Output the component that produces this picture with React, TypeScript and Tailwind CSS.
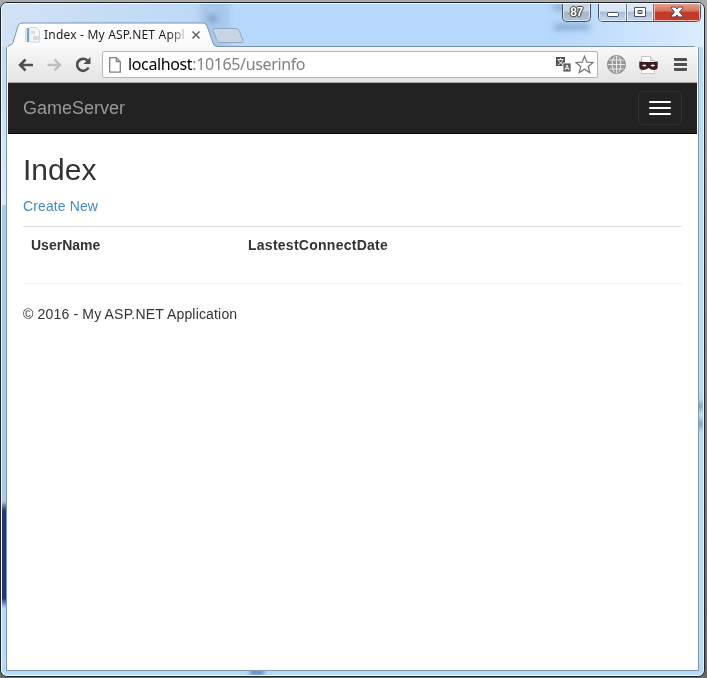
import React from "react";

function CaptionButtons() {
  return (
    <div className="absolute right-[2px] top-0 flex h-[19px] items-start">
      <div className="mr-[7px] flex h-[19px] w-[29px] items-center justify-center rounded-b-[5px] border border-t-0 border-[#43526a] bg-linear-to-b from-[#ccd6e2] from-45% via-[#a4b3c6] via-50% to-[#b4c5da] font-['Liberation_Sans',sans-serif] text-[12px] font-bold tracking-[-0.5px] text-white shadow-[inset_0_0_0_1px_#dbe6f1] [text-shadow:1px_0_1px_#444,-1px_0_1px_#444,0_1px_1px_#444,0_-1px_1px_#444]">
        87
      </div>
      <div className="flex h-[19px] w-[103px] overflow-hidden rounded-b-[5px] border border-t-0 border-[#43526a]">
        <div className="flex w-[28px] items-center justify-center border-r border-[#64748b] bg-linear-to-b from-[#dce7f3] from-45% via-[#a9bfd9] via-50% to-[#c6d9ef] shadow-[inset_0_0_0_1px_#e5eef8]">
          <svg className="shrink-0" width="14" height="14" viewBox="0 0 14 14"><rect x="1.500" y="7.500" width="11" height="4" rx="1" fill="#fff" stroke="#4b5364" /></svg>
        </div>
        <div className="flex w-[27px] items-center justify-center border-r border-[#64748b] bg-linear-to-b from-[#dce7f3] from-45% via-[#a9bfd9] via-50% to-[#c6d9ef] shadow-[inset_0_0_0_1px_#e5eef8]">
          <svg className="shrink-0" width="14" height="14" viewBox="0 0 14 14"><path d="M1.500 2.500h11v9h-11zM5 5.500h4v3h-4z" fill="#fff" fillRule="evenodd" stroke="#4b5364" /></svg>
        </div>
        <div className="flex flex-1 items-center justify-center bg-linear-to-b from-[#e6a591] from-0% via-[#d4735c] via-45% to-[#c3392a] to-50% shadow-[inset_0_0_0_1px_#eeb9aa]">
          <svg className="shrink-0" width="14" height="12" viewBox="0 0 14 12"><path d="M1.500 1h3.700L7 3l1.800-2h3.700v1.500L9.500 6l3 3.500V11H8.800L7 9l-1.800 2H1.500V9.500l3-3.500-3-3.500z" fill="#fff" stroke="#55405a" strokeLinejoin="round" /></svg>
        </div>
      </div>
    </div>
  );
}

function TabStrip() {
  return (
    <div className="relative h-[44px] w-full shrink-0">
      <svg className="absolute left-0 top-0" width="701" height="44" viewBox="2 3 701 44">
        <defs>
          <linearGradient id="tab" x1="0" y1="0" x2="0" y2="1">
            <stop offset="0" stopColor="#fff" />
            <stop offset="1" stopColor="#f8f8f8" />
          </linearGradient>
          <linearGradient id="glass" x1="0" y1="0" x2="1" y2="0">
            <stop offset="0" stopColor="#d3e2f4" />
            <stop offset="1" stopColor="#b9d8f8" />
          </linearGradient>
          <linearGradient id="shine" x1="0" y1="0" x2="1" y2="0">
            <stop offset="0" stopColor="#dcecfd" stopOpacity="0" />
            <stop offset="1" stopColor="#dcecfd" />
          </linearGradient>
          <filter id="soft" x="-20%" y="-20%" width="140%" height="140%"><feGaussianBlur stdDeviation="3" /></filter>
        </defs>
        <path d="M560 3h143v44H560z" fill="url(#shine)" />
        <g filter="url(#soft)">
          <path d="M-5 -10H215V60H-5z" fill="url(#glass)" />
          <path d="M200 0h30v60h-30z" fill="#9fc1e6" opacity=".7" />
          <path d="M208 16h9v5h-9z" fill="#5f82aa" />
          <path d="M553 4h13v6h-13zM554 24h36v6h-36z" fill="#6d8eb4" opacity=".65" />
        </g>
        <path d="M213 30.500q-1-2 2-2h20q3 0 4 2l4 10q1 2-2 2h-20q-3 0-4-2z" fill="#c8d5e4" stroke="#8ea6c1" />
        <path d="M7 48V48q1-2 2-2.500q3-.5 4-3l5-16.500q1-3 4-3h181q3 0 4 3l6 17q1 3.500 4 3.500h476q4 0 4 4H7z" fill="url(#tab)" stroke="#7b92ad" />
      </svg>
      <div className="relative flex h-full items-end pb-[3px] pl-[23px]">
        <svg className="mb-px" width="16" height="16" viewBox="0 0 16 16">
          <path d="M4.500.5h7l3 3v11.500h-10z" fill="#f5f7f8" stroke="#ccd3d9" />
          <path d="M0 1h5v14H0z" fill="#cfe2f0" />
          <path d="M2 1h2v14H2z" fill="#70a7cf" />
          <path d="M6 4h4v3H6zM8 9h7v4H8z" fill="#d5dde3" />
        </svg>
        <span className="relative top-px ml-[3px] w-[141px] overflow-hidden whitespace-nowrap bg-linear-to-r from-[#1c1c1c] from-88% to-[#c9c9c9] bg-clip-text font-['Noto_Sans',sans-serif] text-[12px] leading-[20px] tracking-[0.2px] text-transparent">
          Index - My ASP.NET Appl
        </span>
        <svg className="mb-[4px] ml-[6px]" width="10" height="10" viewBox="0 0 10 10"><path d="M1.500 1.500l7 7m0-7l-7 7" stroke="#646464" strokeWidth="1.600" /></svg>
      </div>
      <CaptionButtons />
    </div>
  );
}

function Toolbar() {
  return (
    <div className="flex h-[36px] shrink-0 items-center border-b border-[#a9a9a9] bg-linear-to-b from-[#f8f8f8] to-[#e4e4e4] pl-[10px] pr-[10px]">
      <svg width="16" height="14" viewBox="1 0 16 14" fill="none" stroke="#505050" strokeWidth="2.500"><path d="M8.500 1.500L3 7l5.500 5.500M3 7H16" /></svg>
      <svg className="ml-[13px]" width="16" height="14" viewBox="0.500 0 16 14" fill="none" stroke="#bdbdbd" strokeWidth="2.300"><path d="M8 1.500L13.500 7 8 12.500M13.500 7H1" /></svg>
      <svg className="ml-[13px]" width="17" height="16" viewBox="1 0 17 16"><path d="M13.500 10.500A6 6 0 1 1 12.300 3.500" fill="none" stroke="#505050" strokeWidth="2.600" /><path d="M15.500 0v7H8.500z" fill="#505050" /></svg>
      <div className="ml-[9px] flex h-[27px] w-[496px] shrink-0 items-center rounded-[2px] border border-[#b4b4b4] bg-white pl-[6px] pr-[3px]">
        <svg width="12" height="16" viewBox="0 0 12 16"><path d="M.7.7h6.600l4 4v10.500H.7zM7.300.7v4h4" fill="#fff" stroke="#808080" strokeWidth="1.300" /></svg>
        <span className="relative -top-px ml-[7px] whitespace-nowrap font-['Noto_Sans',sans-serif] text-[16px] leading-[24px] tracking-[-0.37px] text-[#808080]"><span className="text-black">localhost</span>:10165/userinfo</span>
        <svg className="ml-auto" width="15" height="15" viewBox="0 0 15 15">
          <path d="M0 0h9v9H0z" fill="#505050" /><path d="M7 6h8v9H7z" fill="#606060" stroke="#fff" strokeWidth=".8" />
          <path d="M1.500 2.500h6M4.500 1v1.500M2.500 3c1 2.500 3 4 4.500 4.500M6.500 3C6 5.500 4 7 2 7.500M9 13l2-5 2 5M9.800 11.500h2.500" fill="none" stroke="#fff" strokeWidth=".9" />
        </svg>
        <svg className="ml-[4px]" width="19" height="19" viewBox="0 0 19 19"><path d="M9.500 1.300l2.300 5.800 6.200.4-4.700 4 1.500 6.100-5.300-3.400-5.300 3.400 1.500-6.100-4.700-4 6.200-.4z" fill="#fff" stroke="#757575" strokeWidth="1.200" /></svg>
      </div>
      <svg className="ml-[9px]" width="19" height="19" viewBox="0 0 19 19"><circle cx="9.500" cy="9.500" r="9" fill="#999" /><g fill="none" stroke="#f1f1f1" strokeWidth=".9"><ellipse cx="9.500" cy="9.500" rx="4.300" ry="9" /><path d="M9.500 0v19M0 9.500h19M2 5h15M2 14h15" /></g><circle cx="9.500" cy="9.500" r="9" fill="none" stroke="#888" /></svg>
      <svg className="ml-[13px]" width="19" height="18" viewBox="0 0 19 18"><path d="M2.500.5h9l4 4v13h-13z" fill="#fff" stroke="#c4c4c4" /><path d="M11.500.5v4h4" fill="#e6e6e6" stroke="#c4c4c4" /><path d="M.3 5.500q9 1 18.400 0V11q0 3-4 3-3 0-5.200-2Q7.300 14 4.300 14q-4 0-4-3z" fill="#401c1e" /><path d="M3 9.500q2.500-2 4.500 0-2 2-4.500 0zM11.500 9.500q2.500-2 4.500 0-2 2-4.500 0z" fill="#fff" /></svg>
      <svg className="ml-auto" width="13" height="13" viewBox="0 0 13 13"><path d="M0 0h12q1 0 1 1v2H1Q0 3 0 2zM0 5h13v3H0zM0 10h13v2q0 1-1 1H1q-1 0-1-1z" fill="#505050" /></svg>
    </div>
  );
}

export default function App() {
  return (
    <div className="h-[678px] w-[707px] overflow-hidden bg-linear-to-b from-[#aaaaaa] to-[#686868] pt-[2px]">
      <div className="relative flex h-[675px] w-[705px] flex-col overflow-hidden rounded-[7px] border border-[#1c2530] bg-[#b7d9fc]">
        <div className="absolute left-px top-[44px] h-[158px] w-[5px] bg-linear-to-b from-[#c4daf1] to-[#dceafa]" />
        <div className="absolute left-px top-[202px] h-[300px] w-[5px] bg-[#abcaec]" />
        <div className="absolute left-px top-[498px] h-[106px] w-[5px] bg-linear-to-b from-transparent via-[#29366f] via-12% to-transparent" />
        <div className="absolute left-px top-[500px] h-[100px] w-[5px] bg-linear-to-b from-transparent from-0% via-[#29366f] via-10% to-[#29366f] to-90%" />
        <div className="absolute left-px top-[595px] h-[10px] w-[5px] bg-linear-to-b from-[#29366f] to-[#b7d9fc]" />
        <div className="absolute bottom-px left-[249px] h-[5px] w-[14px] bg-[#4b7fb8] blur-[2px]" />
        <div className="absolute right-px top-[399px] h-[8px] w-[5px] bg-[#7892b4] blur-[2px]" />
        <div className="absolute right-px top-[417px] h-[8px] w-[5px] bg-[#7892b4] blur-[2px]" />
        <div className="relative mx-px"><TabStrip /></div>
        <div className="relative mx-[5px] mb-[5px] flex min-h-0 flex-1 flex-col border-x border-b border-[#8096ad] bg-white px-px pb-px font-['Liberation_Sans',Arial,sans-serif] text-[14px] leading-[20px] text-[#333]">
          <Toolbar />
          <header className="flex h-[51px] shrink-0 items-center justify-between border-b border-[#080808] bg-[#222] px-[15px]">
            <span className="text-[18px] leading-[20px] text-[#999]">GameServer</span>
            <button className="flex h-[34px] w-[44px] flex-col items-center justify-center gap-[4px] rounded-[4px] border border-[#333]" aria-label="Toggle navigation">
              <span className="h-[2px] w-[22px] rounded-[1px] bg-white" />
              <span className="h-[2px] w-[22px] rounded-[1px] bg-white" />
              <span className="h-[2px] w-[22px] rounded-[1px] bg-white" />
            </button>
          </header>
          <main className="px-[15px] pt-[19px]">
            <h2 className="text-[30px] leading-[33px]">Index</h2>
            <p className="mt-[10px] tracking-[0.11px]"><a className="text-[#428bca]">Create New</a></p>
            <table className="mt-[10px] w-full border-t border-[#ddd]">
              <thead>
                <tr>
                  <th className="w-[217px] p-[8px] text-left font-bold">UserName</th>
                  <th className="p-[8px] text-left font-bold tracking-[0.26px]">LastestConnectDate</th>
                </tr>
              </thead>
            </table>
            <hr className="mt-[20px] border-[#eee]" />
            <footer className="mt-[20px] tracking-[0.17px]">© 2016 - My ASP.NET Application</footer>
          </main>
        </div>
        <div className="pointer-events-none absolute inset-0 rounded-[6px] border border-[#f2f8ff]" />
      </div>
    </div>
  );
}
